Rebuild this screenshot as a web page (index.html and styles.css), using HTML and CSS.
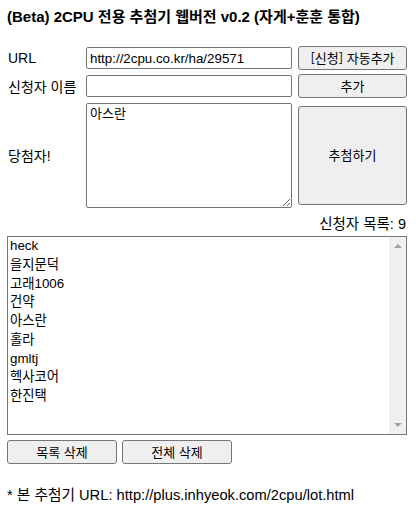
FILE: index.html
```html
<!DOCTYPE html>
<html lang="ko">

<head>
    <meta charset="UTF-8">
    <meta name="viewport" content="width=device-width, initial-scale=1.0">
    <title>2CPU 추첨기</title>
    <link rel="stylesheet" href="styles.css">
</head>

<body>
    <div class="page">
        <h3 class="title">(Beta) 2CPU 전용 추첨기 웹버전 v0.2 (자게+훈훈 통합)</h3>
        <div class="form">
            <label class="label">URL</label>
            <input class="text" type="text" value="http://2cpu.co.kr/ha/29571">
            <button class="btn">[신청] 자동추가</button>

            <label class="label">신청자 이름</label>
            <input class="text" type="text">
            <button class="btn">추가</button>

            <label class="label">당첨자!</label>
            <textarea class="winner">아스란</textarea>
            <button class="btn draw">추첨하기</button>
        </div>
        <div class="count">신청자 목록: 9</div>
        <div class="list">
            <div class="items">
                <div>heck</div>
                <div>을지문덕</div>
                <div>고래1006</div>
                <div>건약</div>
                <div>아스란</div>
                <div>홀라</div>
                <div>gmltj</div>
                <div>헥사코어</div>
                <div>한진택</div>
            </div>
            <div class="scroll">
                <span class="arrow up"></span>
                <span class="arrow down"></span>
            </div>
        </div>
        <div class="actions">
            <button class="btn">목록 삭제</button>
            <button class="btn">전체 삭제</button>
        </div>
        <p class="footer">* 본 추첨기 URL: http://plus.inhyeok.com/2cpu/lot.html</p>
    </div>
</body>

</html>
```

FILE: styles.css
```css
body {
    margin: 0;
    font-family: "Liberation Sans", "Noto Sans CJK KR", sans-serif;
    color: #000;
    background: #fff;
}
.page {
    width: 400px;
    padding: 8px 0 0 7px;
}
.title {
    margin: 0;
    font-size: 15px;
    line-height: 18px;
    font-weight: bold;
}
.form {
    margin-top: 20px;
    display: grid;
    grid-template-columns: 73px 206px 109px;
    grid-template-rows: 24px 24px 106px;
    column-gap: 6px;
    row-gap: 4px;
    align-items: center;
}
.label {
    font-size: 14px;
    padding-left: 1px;
    white-space: nowrap;
}
.text {
    box-sizing: border-box;
    height: 22px;
    margin: 0;
    padding: 1px 3px;
    border: 1px solid #767676;
    border-radius: 2px;
    font-family: "Liberation Sans", "Noto Sans CJK KR", sans-serif;
    font-size: 13.33px;
}
.winner {
    box-sizing: border-box;
    height: 105px;
    margin: 0;
    padding: 1px 3px;
    border: 1px solid #767676;
    border-radius: 2px;
    font-family: "Noto Sans CJK KR", sans-serif;
    font-size: 13px;
    line-height: 16px;
    resize: both;
}
.btn {
    box-sizing: border-box;
    height: 24px;
    margin: 0;
    padding: 0 4px;
    background: #efefef;
    border: 1px solid #767676;
    border-radius: 3px;
    font-family: "Noto Sans CJK KR", sans-serif;
    font-size: 13px;
    line-height: 20px;
    color: #000;
    cursor: pointer;
}
.draw {
    height: 99px;
}
.count {
    margin-top: 7px;
    text-align: right;
    font-size: 14.5px;
    line-height: 18px;
    padding-right: 1px;
}
.list {
    box-sizing: border-box;
    margin-top: 3px;
    height: 199px;
    border: 1px solid #767676;
    display: flex;
}
.items {
    flex: 1;
    padding: 0 2px;
    font-size: 13.33px;
    line-height: 18.75px;
}
.scroll {
    width: 17px;
    background: #f0f0f0;
    display: flex;
    flex-direction: column;
    justify-content: space-between;
    align-items: center;
    padding: 7px 0;
}
.arrow {
    width: 0;
    height: 0;
    border-left: 4px solid transparent;
    border-right: 4px solid transparent;
}
.up {
    border-bottom: 4px solid #a3a3a3;
}
.down {
    border-top: 4px solid #a3a3a3;
}
.actions {
    margin-top: 5px;
    display: flex;
    gap: 5px;
}
.actions .btn {
    width: 110px;
    height: 24px;
}
.footer {
    margin: 22px 0 0;
    font-size: 14.7px;
    line-height: 18px;
}
```
